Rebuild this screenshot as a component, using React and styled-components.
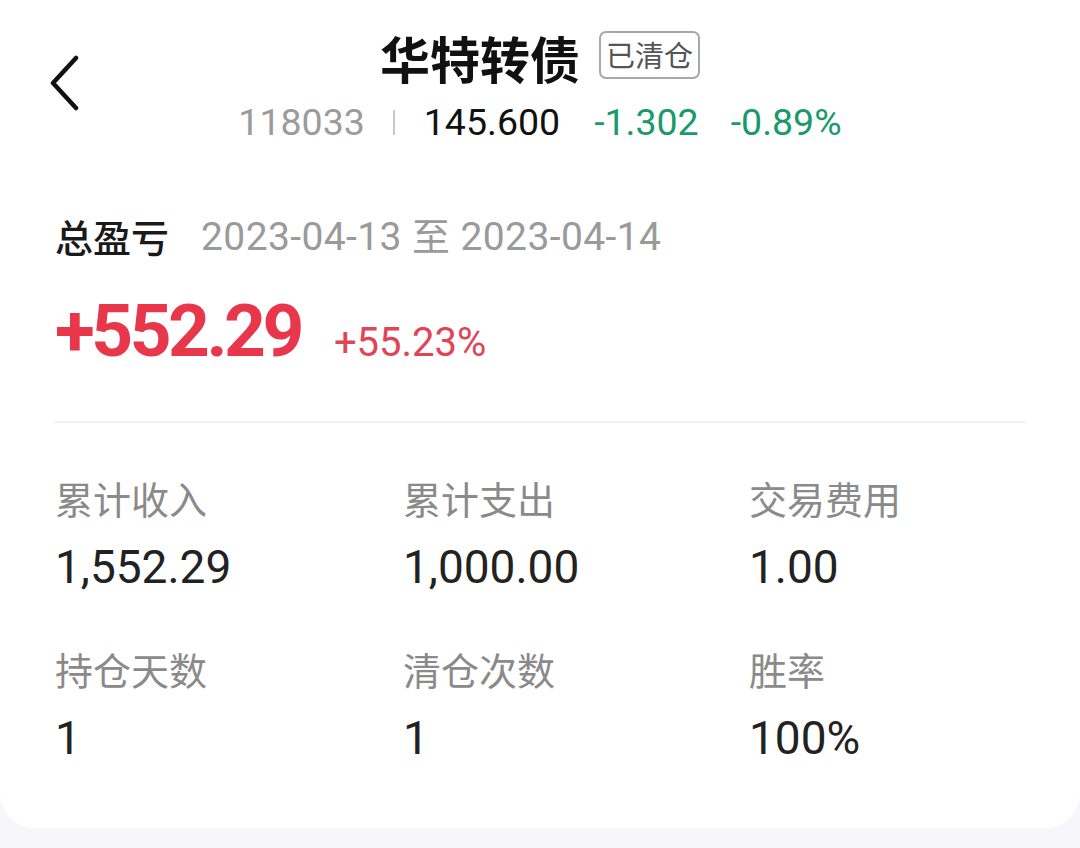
import React from "react";
import styled, { createGlobalStyle } from "styled-components";

const Global = createGlobalStyle`
  html, body { margin: 0; padding: 0; background: #f6f6fb; }
  body { font-family: Roboto, "Noto Sans CJK SC", sans-serif; }
`;

const CJK = `"Noto Sans CJK SC", "Noto Sans", sans-serif`;
const NUM = `Roboto, "Noto Sans CJK SC", sans-serif`;

const Card = styled.div`
  background: #ffffff;
  height: 828px;
  box-sizing: border-box;
  border-radius: 0 0 34px 34px;
  display: flex;
  flex-direction: column;
`;

const Header = styled.header`
  display: grid;
  grid-template-columns: 1fr auto 1fr;
  align-items: start;
  padding: 32px 48px 0 48px;
`;

const BackButton = styled.button`
  border: none;
  background: none;
  padding: 0;
  margin-top: 23px;
  width: 36px;
  height: 56px;
  justify-self: start;
  cursor: pointer;
  display: flex;
`;

const Center = styled.div`
  display: flex;
  flex-direction: column;
  align-items: center;
`;

const TitleRow = styled.div`
  display: flex;
  align-items: center;
  gap: 19px;
  height: 50px;
`;

const Title = styled.h1`
  margin: 0;
  font-family: ${CJK};
  font-size: 50px;
  line-height: 1;
  font-weight: 700;
  color: #111;
`;

const Badge = styled.span`
  font-family: ${CJK};
  font-size: 29px;
  line-height: 1;
  color: #555;
  border: 2px solid #a8a8a8;
  border-radius: 7px;
  padding: 7px 5px 8px;
  margin-top: -4px;
`;

const QuoteRow = styled.div`
  display: flex;
  align-items: center;
  margin-top: 22px;
  font-family: ${NUM};
  font-size: 37.5px;
  line-height: 1;
`;

const Quote = styled.span`
  color: ${(p) => p.$color};
  margin-left: ${(p) => p.$gap || 0}px;
`;

const Sep = styled.span`
  width: 2px;
  height: 25px;
  background: #c8c8c8;
  margin: 0 29px 0 28px;
`;

const Body = styled.section`
  padding: 0 55px;
  display: flex;
  flex-direction: column;
`;

const RangeRow = styled.div`
  display: flex;
  align-items: center;
  margin-top: 73px;
  gap: 32px;
`;

const SectionLabel = styled.span`
  font-family: ${CJK};
  font-size: 38px;
  line-height: 1;
  color: #1a1a1a;
  font-weight: 500;
`;

const DateRange = styled.span`
  font-family: ${NUM};
  font-size: 39px;
  line-height: 1;
  color: #9a9a9a;
  letter-spacing: 0.4px;
`;

const Cjk = styled.span`
  font-family: ${CJK};
  font-size: 38px;
`;

const ProfitRow = styled.div`
  display: flex;
  align-items: baseline;
  gap: 33px;
  margin-top: 38px;
`;

const Profit = styled.span`
  font-family: ${NUM};
  font-size: 73px;
  line-height: 1;
  font-weight: 700;
  color: #e8374a;
  letter-spacing: -3.5px;
`;

const ProfitRate = styled.span`
  font-family: ${NUM};
  font-size: 40px;
  line-height: 1;
  color: #e24456;
`;

const Divider = styled.hr`
  border: none;
  height: 2px;
  background: #efefef;
  margin: 53px 0 0;
`;

const Stats = styled.div`
  display: grid;
  grid-template-columns: 348px 346px 1fr;
  row-gap: 60px;
  margin-top: 56px;
`;

const Stat = styled.div`
  display: flex;
  flex-direction: column;
  gap: 27px;
`;

const StatLabel = styled.span`
  font-family: ${CJK};
  font-size: 38px;
  line-height: 1;
  color: #8a8a8a;
`;

const StatValue = styled.span`
  font-family: ${NUM};
  font-size: 46px;
  line-height: 1;
  color: #222;
`;

const stats = [
  ["累计收入", "1,552.29"],
  ["累计支出", "1,000.00"],
  ["交易费用", "1.00"],
  ["持仓天数", "1"],
  ["清仓次数", "1"],
  ["胜率", "100%"],
];

export default function App() {
  return (
    <>
      <Global />
      <Card>
        <Header>
          <BackButton aria-label="返回">
            <svg width="36" height="56" viewBox="0 0 36 56" fill="none">
              <path
                d="M28 3 L5 28 L28 53"
                stroke="#111"
                strokeWidth="4.5"
                strokeLinecap="round"
                strokeLinejoin="round"
              />
            </svg>
          </BackButton>
          <Center>
            <TitleRow>
              <Title>华特转债</Title>
              <Badge>已清仓</Badge>
            </TitleRow>
            <QuoteRow>
              <Quote $color="#9b9b9b">118033</Quote>
              <Sep />
              <Quote $color="#111">145.600</Quote>
              <Quote $color="#1a9a6b" $gap={34}>-1.302</Quote>
              <Quote $color="#1a9a6b" $gap={32}>-0.89%</Quote>
            </QuoteRow>
          </Center>
          <div />
        </Header>
        <Body>
          <RangeRow>
            <SectionLabel>总盈亏</SectionLabel>
            <DateRange>
              2023-04-13 <Cjk>至</Cjk> 2023-04-14
            </DateRange>
          </RangeRow>
          <ProfitRow>
            <Profit>+552.29</Profit>
            <ProfitRate>+55.23%</ProfitRate>
          </ProfitRow>
          <Divider />
          <Stats>
            {stats.map(([label, value]) => (
              <Stat key={label}>
                <StatLabel>{label}</StatLabel>
                <StatValue>{value}</StatValue>
              </Stat>
            ))}
          </Stats>
        </Body>
      </Card>
    </>
  );
}
